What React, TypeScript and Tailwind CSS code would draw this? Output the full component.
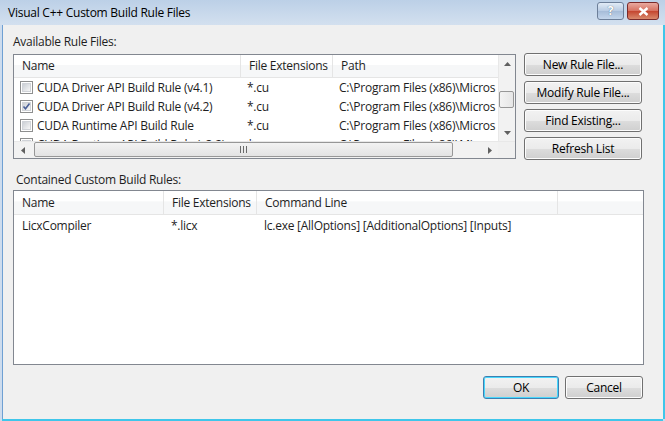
const font = "font-['Segoe_UI','Open_Sans',sans-serif] tracking-[-0.25px]";

const Check = ({ checked }: { checked?: boolean }) => (
  <span className="w-[13px] h-[13px] shrink-0 border border-[#8e8f8f] bg-white p-[1px] flex">
    <span className="flex-1 relative bg-[linear-gradient(135deg,#cbcfd5,#f7f7f7)] border border-[#d0d3d8]">
      {checked && (
        <svg width="9" height="9" viewBox="0 0 9 9" className="absolute left-[-1px] top-[-1px]">
          <path d="M1.5 4.5 L3.5 6.8 L7.5 1.5" stroke="#4a5f97" strokeWidth="1.6" fill="none" />
        </svg>
      )}
    </span>
  </span>
);

const Arrow = ({ dir }: { dir: "up" | "down" | "left" | "right" }) => {
  const pts = {
    up: "0,4 3.5,0 7,4",
    down: "0,0 3.5,4 7,0",
    left: "4,0 0,3.5 4,7",
    right: "0,0 4,3.5 0,7",
  }[dir];
  const w = dir === "up" || dir === "down" ? 7 : 4;
  const h = dir === "up" || dir === "down" ? 4 : 7;
  return (
    <svg width={w} height={h} viewBox={`0 0 ${w} ${h}`}>
      <polygon points={pts} fill="#606060" />
    </svg>
  );
};

const Btn = ({ children, w, def }: { children: string; w: string; def?: boolean }) => (
  <button
    className={`${w} h-[23px] rounded-[3px] border ${
      def ? "border-[#3c7fb1] shadow-[inset_0_0_0_1px_#48d7fc]" : "border-[#707070] shadow-[inset_0_0_0_1px_#fcfcfc]"
    } bg-[linear-gradient(#f2f2f2_0%,#ebebeb_50%,#dddddd_51%,#cfcfcf_100%)] text-[12px] text-black leading-[16px] flex items-center justify-center`}
  >
    {children}
  </button>
);

const HeaderCell = ({ w, children, last }: { w: string; children?: string; last?: boolean }) => (
  <div
    className={`${w} shrink-0 h-full flex items-center pl-[8px] ${last ? "" : "border-r border-[#e5e5e5]"} bg-[linear-gradient(#ffffff_0%,#ffffff_45%,#f6f7f8_46%,#f6f7f8_100%)] whitespace-nowrap overflow-hidden`}
  >
    {children}
  </div>
);

const rules = [
  { name: "CUDA Driver API Build Rule (v4.1)", ext: "*.cu", checked: false },
  { name: "CUDA Driver API Build Rule (v4.2)", ext: "*.cu", checked: true },
  { name: "CUDA Runtime API Build Rule", ext: "*.cu", checked: false },
  { name: "CUDA Runtime API Build Rule (v3.2)", ext: "*.cu", checked: false },
];

const App = () => (
  <div className={`${font} w-[665px] h-[421px] flex flex-col bg-[#cddcee] text-[12px] text-[#1e1e1e] overflow-hidden`}>
    {/* title bar */}
    <div className="h-[25px] shrink-0 flex items-center pl-[8px] pr-[6px] bg-[linear-gradient(#bcd0e7,#d3e0ef)]">
      <span className="text-[12px] text-black">Visual C++ Custom Build Rule Files</span>
      <div className="ml-auto flex gap-[3px] self-start mt-[2px]">
        <div className="w-[27px] h-[18px] rounded-[3px] border border-[#6d7f99] bg-[linear-gradient(#e1ebf6,#b8cbe3_50%,#a6bcd8_51%,#c4d6ec)] flex items-center justify-center text-white font-bold text-[12px] [text-shadow:0_0_1px_#3a4a60]">
          ?
        </div>
        <div className="w-[32px] h-[18px] rounded-[3px] border border-[#7a2a2a] bg-[linear-gradient(#e9a99f,#d6705f_50%,#c4452f_51%,#d98a6d)] flex items-center justify-center">
          <svg width="11" height="9" viewBox="0 0 11 9">
            <path d="M1.5 1 L9.5 8 M9.5 1 L1.5 8" stroke="#ffffff" strokeWidth="2.4" />
          </svg>
        </div>
      </div>
    </div>

    {/* client */}
    <div className="flex-1 flex ml-[2px] mr-[2px] mb-[2px] border-l border-[#6fa0d3] shadow-[0_2px_0_#3fc6ea,2px_0_0_#3fc6ea]">
      <div className="flex-1 bg-[#f0f0f0] pl-[10px] pt-[9px] flex flex-col">
        <div className="h-[16px] leading-[16px]">Available Rule Files:</div>

        <div className="mt-[4px] flex items-start">
          {/* top list */}
          <div className="w-[503px] h-[105px] border border-[#828790] bg-white flex flex-col">
            <div className="flex h-[86px]">
              <div className="flex-1 overflow-hidden flex flex-col">
                <div className="h-[23px] shrink-0 flex border-b border-[#e5e5e5]">
                  <HeaderCell w="w-[227px]">Name</HeaderCell>
                  <HeaderCell w="w-[92px]">File Extensions</HeaderCell>
                  <HeaderCell w="w-[200px]" last>
                    Path
                  </HeaderCell>
                </div>
                {rules.map((r) => (
                  <div key={r.name} className="h-[19px] shrink-0 flex items-center whitespace-nowrap">
                    <div className="w-[227px] shrink-0 flex items-center pl-[6px] gap-[4px]">
                      <Check checked={r.checked} />
                      <span>{r.name}</span>
                    </div>
                    <div className="w-[92px] shrink-0 pl-[6px]">{r.ext}</div>
                    <div className="pl-[6px]">C:\Program Files (x86)\Micros</div>
                  </div>
                ))}
              </div>
              {/* vertical scrollbar */}
              <div className="w-[17px] shrink-0 bg-[#f2f2f2] border-l border-[#e8e8e8] flex flex-col items-center">
                <div className="h-[17px] flex items-center justify-center">
                  <Arrow dir="up" />
                </div>
                <div className="flex-1 w-full relative">
                  <div className="absolute left-[0px] right-[1px] top-[19px] h-[17px] rounded-[2px] border border-[#979797] bg-[linear-gradient(90deg,#f3f3f3,#e6e6e6)]" />
                </div>
                <div className="h-[17px] flex items-center justify-center">
                  <Arrow dir="down" />
                </div>
              </div>
            </div>
            {/* horizontal scrollbar */}
            <div className="h-[17px] flex bg-[#f2f2f2] border-t border-[#e8e8e8]">
              <div className="w-[17px] flex items-center justify-center">
                <Arrow dir="left" />
              </div>
              <div className="flex-1 relative">
                <div className="absolute left-[3px] w-[419px] top-0 bottom-[1px] rounded-[2px] border border-[#979797] bg-[linear-gradient(#f3f3f3,#e3e3e3)] flex items-center justify-center">
                  <svg width="7" height="7" viewBox="0 0 7 7">
                    <path d="M0.5 0 V7 M3.5 0 V7 M6.5 0 V7" stroke="#6a6a6a" strokeWidth="1" />
                  </svg>
                </div>
              </div>
              <div className="w-[17px] flex items-center justify-center">
                <Arrow dir="right" />
              </div>
              <div className="w-[17px] bg-[#f0f0f0]" />
            </div>
          </div>

          {/* side buttons */}
          <div className="ml-[8px] -mt-[1px] flex flex-col gap-[5px]">
            <Btn w="w-[118px]">New Rule File...</Btn>
            <Btn w="w-[118px]">Modify Rule File...</Btn>
            <Btn w="w-[118px]">Find Existing...</Btn>
            <Btn w="w-[118px]">Refresh List</Btn>
          </div>
        </div>

        <div className="mt-[12px] h-[16px] leading-[16px] pl-[3px]">Contained Custom Build Rules:</div>

        {/* bottom list */}
        <div className="mt-[2px] w-[631px] h-[175px] border border-[#828790] bg-white flex flex-col">
          <div className="h-[24px] shrink-0 flex border-b border-[#e5e5e5]">
            <HeaderCell w="w-[150px]">Name</HeaderCell>
            <HeaderCell w="w-[93px]">File Extensions</HeaderCell>
            <HeaderCell w="w-[301px]">Command Line</HeaderCell>
            <HeaderCell w="flex-1" last />
          </div>
          <div className="h-[22px] flex items-center whitespace-nowrap">
            <div className="w-[150px] shrink-0 pl-[8px]">LicxCompiler</div>
            <div className="w-[93px] shrink-0 pl-[7px]">*.licx</div>
            <div className="pl-[7px]">lc.exe [AllOptions] [AdditionalOptions] [Inputs]</div>
          </div>
        </div>

        <div className="mt-[11px] w-[631px] flex justify-end gap-[6px] pr-[1px]">
          <Btn w="w-[76px]" def>
            OK
          </Btn>
          <Btn w="w-[78px]">Cancel</Btn>
        </div>
      </div>
    </div>
  </div>
);

export default App;
